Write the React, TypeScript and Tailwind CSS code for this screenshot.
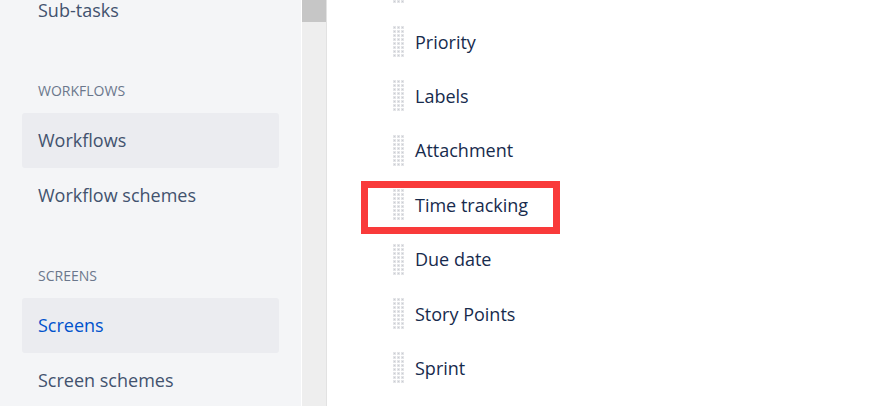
import React from "react";

const sections = [
  { title: "WORKFLOWS", items: [{ label: "Workflows", active: true }, { label: "Workflow schemes" }] },
  { title: "SCREENS", items: [{ label: "Screens", active: true, link: true }, { label: "Screen schemes" }] },
];

const fields = ["Priority", "Labels", "Attachment", "Time tracking", "Due date", "Story Points", "Sprint"];

const Grip = () => (
  <svg width="12" height="32" viewBox="0 0 12 32" className="shrink-0">
    {Array.from({ length: 8 }).map((_, r) =>
      Array.from({ length: 3 }).map((_, c) => (
        <g key={`${r}-${c}`}>
          <rect x={c * 4} y={r * 4} width="3" height="3" fill="#e4e5e8" />
          <rect x={c * 4 + 1} y={r * 4 + 1} width="1" height="1" fill="#c9ccd2" />
        </g>
      ))
    )}
  </svg>
);

const FieldRow = ({ label, marked }: { label: string; marked?: boolean }) => (
  <div className="relative flex items-center h-[54.4px]">
    <Grip />
    <span className="ml-[10px] text-[18px] text-[#172b4d]">{label}</span>
    {/* red annotation box */}
    {marked && (
      <div className="absolute -left-[32px] top-[3px] w-[199px] h-[53px] border-[7px] border-[#f93a3a]" />
    )}
  </div>
);

export default function App() {
  return (
    <div
      className="flex w-[876px] h-[406px] overflow-hidden bg-white"
      style={{ fontFamily: '"Open Sans", "Noto Sans", sans-serif' }}
    >
      {/* Sidebar */}
      <div className="w-[302px] shrink-0 bg-[#f4f5f7] border-r border-white">
        <div className="-mt-[17.5px] px-[22px]">
          <div className="flex items-center h-[55px] px-4 text-[18px] leading-5 text-[#42526e]">Sub-tasks</div>
          {sections.map((s) => (
            <div key={s.title} className="mt-[43px]">
              <div className="px-4 h-5 flex items-center text-[14px] text-[#6b778c] mb-3">{s.title}</div>
              {s.items.map((it) => (
                <div
                  key={it.label}
                  className={`flex items-center h-[55px] px-4 rounded-[3px] text-[18px] ${
                    it.active ? "bg-[#ebecf0]" : ""
                  } ${it.link ? "text-[#0052cc]" : "text-[#42526e]"}`}
                >
                  {it.label}
                </div>
              ))}
            </div>
          ))}
        </div>
      </div>

      {/* Scrollbar */}
      <div className="w-[25px] shrink-0 bg-[#eeeeee] border-r border-[#e2e2e2]">
        <div className="h-[22px] bg-[#c6c6c6]" />
      </div>

      {/* Field list */}
      <div className="flex-1 pl-[66px]">
        <div className="-mt-[39.5px]">
          <FieldRow label="" />
          {fields.map((f) => (
            <FieldRow key={f} label={f} marked={f === "Time tracking"} />
          ))}
        </div>
      </div>
    </div>
  );
}
